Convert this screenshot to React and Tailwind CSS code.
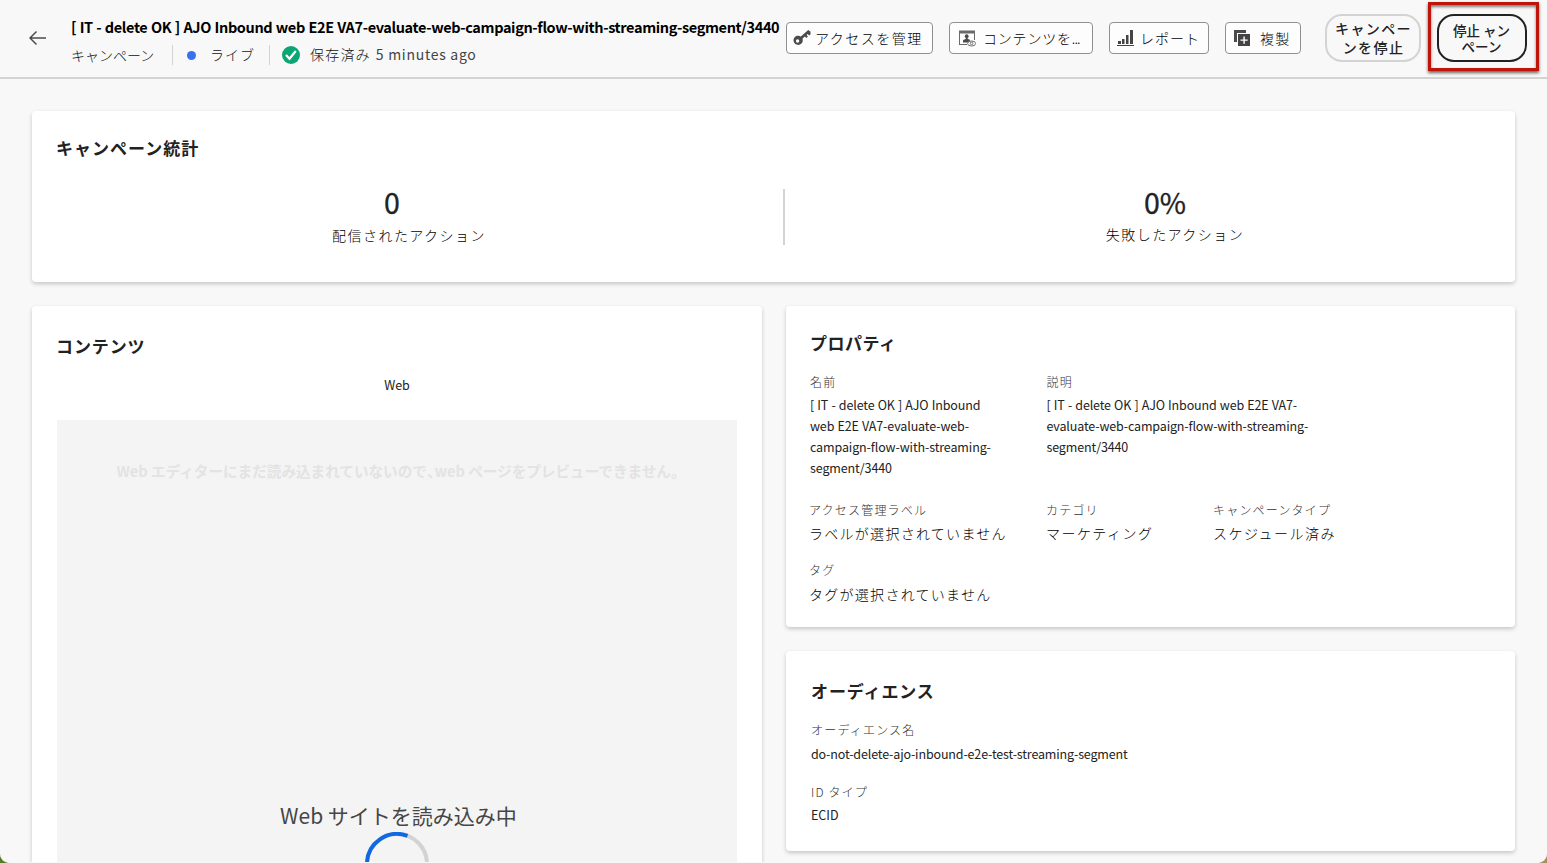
import React from "react";

function KeyIcon() {
  return (
    <svg width="18" height="18" viewBox="0 0 18 18" className="shrink-0">
      <path
        fillRule="evenodd"
        fill="#4b4b4b"
        d="M15.2 1.1 7.9 7.6A4.6 4.6 0 1 0 9.7 10.6L9.6 9.6 11.9 7.5 13.3 8.9 14.9 7.4 13.6 6 14.7 5 16.2 6.5 17.7 5 17.3 2.5ZM4.6 10.3A1.7 1.7 0 1 1 4.6 13.7 1.7 1.7 0 0 1 4.6 10.3Z"
      />
    </svg>
  );
}

function ContentIcon() {
  return (
    <svg width="18" height="18" viewBox="0 0 18 18" className="shrink-0">
      <path d="M1 1.5h16V11h-1V4.5H2V15h7v1H1Z" fill="#6a6a6a" />
      <circle cx="8.7" cy="7.2" r="1.9" fill="#4b4b4b" />
      <path d="M7.9 8h1.7v1.8l2.2 1v2.6H5v-1.9c0-.8 2.9-1.2 2.9-1.7Z" fill="#4b4b4b" />
      <ellipse cx="13.6" cy="14.5" rx="4" ry="2.5" fill="#fff" stroke="#6e6e6e" strokeWidth="1" />
      <circle cx="13.6" cy="14.4" r="1.3" fill="none" stroke="#6e6e6e" strokeWidth="1" />
    </svg>
  );
}

function ReportIcon() {
  return (
    <svg width="18" height="18" viewBox="0 0 18 18" className="shrink-0" fill="#444">
      <rect x="0" y="16" width="17" height="1" />
      <rect x="1" y="12" width="3" height="3" />
      <rect x="5" y="10" width="2.5" height="5" />
      <rect x="9" y="6" width="2.5" height="9" />
      <rect x="13" y="1" width="3" height="14" />
    </svg>
  );
}

function DuplicateIcon() {
  return (
    <svg width="18" height="18" viewBox="0 0 18 18" className="shrink-0">
      <path d="M1 1h12v3H4v9H1Z" fill="#4b4b4b" />
      <path d="M5 5h12v12H5Z" fill="#444" />
      <path d="M10.4 7.5h1.4v2.9h2.9v1.4h-2.9v2.9h-1.4v-2.9H7.5v-1.4h2.9Z" fill="#fff" />
    </svg>
  );
}

function ToolButton({ className, icon, children }) {
  return (
    <button
      className={`flex h-8 shrink-0 items-center whitespace-nowrap rounded-[4px] border border-[#909090] bg-[#fdfdfd] text-[14px] font-light leading-8 text-black ${className}`}
    >
      {icon}
      {children}
    </button>
  );
}

function Card({ className, children }) {
  return (
    <section className={`rounded-[4px] bg-white shadow-[0_2px_4px_rgba(0,0,0,0.2)] ${className}`}>
      {children}
    </section>
  );
}

function Heading({ className = "", children }) {
  return (
    <h2 className={`whitespace-nowrap text-[17px] font-bold leading-6 text-[#222] ${className}`}>
      {children}
    </h2>
  );
}

function Label({ className = "", children }) {
  return (
    <div className={`whitespace-nowrap text-[12px] font-light leading-5 tracking-[1.2px] text-[#333] ${className}`}>
      {children}
    </div>
  );
}

function Value({ className = "tracking-[1.28px]", children }) {
  return (
    <div className={`whitespace-nowrap text-[14px] font-light leading-6 text-black ${className}`}>
      {children}
    </div>
  );
}

function Header() {
  return (
    <header className="flex h-[79px] border-b-2 border-[#d3d3d3]">
      <svg width="18" height="16" viewBox="0 0 18 16" className="ml-[29px] mt-[30px] shrink-0">
        <path d="M17 8H1M7.5 1.5 1 8l6.500 6.500" fill="none" stroke="#4b4b4b" strokeWidth="1.5" />
      </svg>
      <div className="ml-[24px] w-[715px] shrink-0 pt-[15px]">
        <h1 className="whitespace-nowrap text-[14.500px] font-bold leading-6 tracking-[-0.37px] text-black [word-spacing:0.6px]">
          [ IT - delete OK ] AJO Inbound web E2E VA7-evaluate-web-campaign-flow-with-streaming-segment/3440
        </h1>
        <div className="mt-[6px] flex h-5 items-center whitespace-nowrap text-[14px] font-light text-[#111]">
          <span className="w-[101px] pb-px leading-5">キャンペーン</span>
          <span className="h-5 w-px bg-[#d3d3d3]" />
          <span className="ml-3.5 size-[9px] rounded-full bg-[#3772ed]" />
          <span className="ml-3.5 w-[59px] pb-[2px] leading-5 tracking-[1px]">ライブ</span>
          <span className="h-5 w-px bg-[#d3d3d3]" />
          <svg width="18" height="18" viewBox="0 0 18 18" className="ml-3 shrink-0">
            <circle cx="9" cy="9" r="9" fill="#0ba674" />
            <path d="m4 9 3.500 3.800L13.800 5" fill="none" stroke="#fff" strokeWidth="2.200" />
          </svg>
          <span className="ml-[10px] pb-[2px] leading-5 tracking-[1.2px]">保存済み</span>
          <span className="ml-[5px] pb-[2px] font-normal leading-5 tracking-[0.720px] text-[#444]">5 minutes ago</span>
        </div>
      </div>
      <div className="flex pt-[22px]">
        <ToolButton className="w-[147px] pl-[6px] tracking-[1.5px]" icon={<KeyIcon />}>
          <span className="ml-1 pb-px">アクセスを管理</span>
        </ToolButton>
        <ToolButton className="ml-4 w-[144px] pl-[8px]" icon={<ContentIcon />}>
          <span className="ml-[7px] pb-px tracking-[0.8px]">コンテンツを</span>
          <span className="pb-px tracking-[-0.9px]">...</span>
        </ToolButton>
        <ToolButton className="ml-4 w-[100px] pl-[7px] tracking-[1px]" icon={<ReportIcon />}>
          <span className="ml-[5px] pb-px">レポート</span>
        </ToolButton>
        <ToolButton className="ml-4 w-[76px] pl-[7px] tracking-[1.2px]" icon={<DuplicateIcon />}>
          <span className="ml-[9px] pb-px">複製</span>
        </ToolButton>
      </div>
      <button className="ml-6 mt-[14px] h-12 w-24 shrink-0 whitespace-nowrap rounded-[17px] border-2 border-[#d3d3d3] pl-px text-[14px] font-medium leading-[19px] tracking-[1.4px] text-[#222]">
        キャンペー
        <br />
        ンを停止
      </button>
      <div className="ml-[7px] mt-[2px] flex h-[69px] w-[111px] shrink-0 items-start justify-center border-[3px] border-[#be1508] pt-[9px] shadow-[0_2px_3px_rgba(0,0,0,0.6),inset_0_2px_3px_rgba(0,0,0,0.5)]">
        <button className="-ml-1 h-12 w-[90px] whitespace-nowrap rounded-[17px] border-2 border-[#222] text-[13.500px] font-medium leading-[16px] text-[#222]">
          停止 ャン
          <br />
          ペーン
        </button>
      </div>
    </header>
  );
}

function Stat({ value, label, className, labelClass }) {
  return (
    <div className={`flex shrink-0 flex-col items-center ${className}`}>
      <div className="-mt-[2px] text-[28.500px] leading-8 text-[#222] [-webkit-text-stroke:0.3px_#222]">{value}</div>
      <div className={`whitespace-nowrap text-[14px] font-light leading-5 tracking-[1.45px] text-black ${labelClass}`}>
        {label}
      </div>
    </div>
  );
}

export default function App() {
  return (
    <div className="h-[863px] overflow-hidden bg-[linear-gradient(90deg,#587a24_50%,#a58d63_50%)] font-['Noto_Sans_CJK_JP',sans-serif]">
      <div className="h-[863px] overflow-hidden rounded-b-[9px] border-b border-[#f8f8f8] bg-[#f8f8f8]" lang="ja">
        <Header />
        <main className="px-8 pt-8">
          <Card className="h-[171px] px-6 pt-[25px]">
            <Heading className="tracking-[1px]">キャンペーン統計</Heading>
            <div className="mt-7 flex">
              <Stat value="0" label="配信されたアクション" className="w-[672px]" labelClass="ml-[34px] mt-[7px]" />
              <div className="ml-[55px] mt-px h-[56px] w-[2px] shrink-0 bg-[#d3d3d3]" />
              <Stat value="0%" label="失敗したアクション" className="ml-[54px] w-[652px]" labelClass="ml-[20px] mt-[6px]" />
            </div>
          </Card>
          <div className="mt-6 flex items-start gap-6">
            <Card className="h-[600px] w-[730px] px-[25px] pt-7">
              <Heading className="-ml-px tracking-[0.9px]">コンテンツ</Heading>
              <div className="mt-[17px] text-center text-[12.500px] leading-5 text-[#222]">Web</div>
              <div className="mt-[25px] flex h-[500px] flex-col items-center bg-[#f4f4f4]">
                <p className="mt-[39px] whitespace-nowrap pl-[8px] text-[14.600px] font-bold leading-6 text-[#e3e3e3]">
                  Web エディターにまだ読み込まれていないので<span className="tracking-[-7px]">、</span>web ページをプレビューできません。
                </p>
                <p className="mt-[316px] whitespace-nowrap pl-[3px] text-[21px] leading-8 text-[#464646]">
                  Web サイトを読み込み中
                </p>
                <svg width="64" height="64" viewBox="0 0 64 64" className="mt-px shrink-0">
                  <circle cx="32" cy="32" r="30" fill="none" stroke="#d3d3d3" strokeWidth="4" />
                  <path d="M2 32A30 30 0 0 1 42.500 3.900" fill="none" stroke="#1268e2" strokeWidth="4" />
                </svg>
              </div>
            </Card>
            <div className="flex w-[729px] flex-col gap-6">
              <Card className="h-[321px] px-6 pt-[25px]">
                <Heading className="tracking-[0.5px]">プロパティ</Heading>
                <div className="mt-[17px] grid grid-cols-[236.500px_300px]">
                  <div>
                    <Label>名前</Label>
                    <p className="mt-[2px] whitespace-nowrap text-[12.500px] leading-[21px] tracking-[-0.12px] text-[#222] [word-spacing:0.5px]">
                      [ IT - delete OK ] AJO Inbound
                      <br />
                      web E2E VA7-evaluate-web-
                      <br />
                      campaign-flow-with-streaming-
                      <br />
                      segment/3440
                    </p>
                  </div>
                  <div>
                    <Label>説明</Label>
                    <p className="mt-[2px] whitespace-nowrap text-[12.500px] leading-[21px] tracking-[-0.14px] text-[#222] [word-spacing:0.55px]">
                      [ IT - delete OK ] AJO Inbound web E2E VA7-
                      <br />
                      evaluate-web-campaign-flow-with-streaming-
                      <br />
                      segment/3440
                    </p>
                  </div>
                </div>
                <div className="-ml-px mt-[22px] grid grid-cols-[237px_167px_200px]">
                  <div>
                    <Label>アクセス管理ラベル</Label>
                    <Value className="mt-px tracking-[1.28px]">ラベルが選択されていません</Value>
                  </div>
                  <div>
                    <Label>カテゴリ</Label>
                    <Value className="mt-px tracking-[1.5px]">マーケティング</Value>
                  </div>
                  <div>
                    <Label>キャンペーンタイプ</Label>
                    <Value className="mt-px tracking-[1.5px]">スケジュール済み</Value>
                  </div>
                </div>
                <Label className="-ml-px mt-[15px]">タグ</Label>
                <Value className="-ml-px mt-[2px] tracking-[1.28px]">タグが選択されていません</Value>
              </Card>
              <Card className="h-[200px] px-[25px] pt-7">
                <Heading className="tracking-[0.9px]">オーディエンス</Heading>
                <Label className="mt-[17px]">オーディエンス名</Label>
                <p className="mt-[4px] whitespace-nowrap text-[12.500px] leading-5 tracking-[-0.150px] text-[#222]">
                  do-not-delete-ajo-inbound-e2e-test-streaming-segment
                </p>
                <Label className="mt-[18px]">ID タイプ</Label>
                <p className="mt-[3px] text-[12.500px] leading-5 text-[#222]">ECID</p>
              </Card>
            </div>
          </div>
        </main>
      </div>
    </div>
  );
}
